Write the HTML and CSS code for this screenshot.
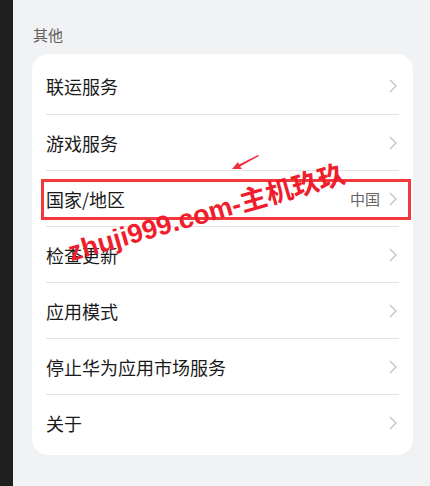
FILE: index.html
```html
<!DOCTYPE html>
<html lang="zh-CN">
<head>
<meta charset="utf-8">
<link rel="stylesheet" href="styles.css">
</head>
<body>
<div class="screen">
  <div class="strip"></div>
  <main class="content">
    <div class="section-title">其他</div>
    <div class="card">
      <div class="row"><span class="label">联运服务</span><span class="right"><svg class="chev" viewBox="0 0 8 14"><path d="M1 1 L7 7 L1 13" /></svg></span></div>
      <div class="row"><span class="label">游戏服务</span><span class="right"><svg class="chev" viewBox="0 0 8 14"><path d="M1 1 L7 7 L1 13" /></svg></span></div>
      <div class="row"><span class="label">国家/地区</span><span class="right"><span class="value">中国</span><svg class="chev" viewBox="0 0 8 14"><path d="M1 1 L7 7 L1 13" /></svg></span></div>
      <div class="row"><span class="label">检查更新</span><span class="right"><svg class="chev" viewBox="0 0 8 14"><path d="M1 1 L7 7 L1 13" /></svg></span></div>
      <div class="row"><span class="label">应用模式</span><span class="right"><svg class="chev" viewBox="0 0 8 14"><path d="M1 1 L7 7 L1 13" /></svg></span></div>
      <div class="row"><span class="label">停止华为应用市场服务</span><span class="right"><svg class="chev" viewBox="0 0 8 14"><path d="M1 1 L7 7 L1 13" /></svg></span></div>
      <div class="row"><span class="label">关于</span><span class="right"><svg class="chev" viewBox="0 0 8 14"><path d="M1 1 L7 7 L1 13" /></svg></span></div>
    </div>
  </main>
  <div class="highlight"></div>
  <svg class="arrow" viewBox="0 0 30 18"><polygon points="27,1 28,2 9,12.5 11,15 1,15 7,8 8,10.5" /></svg>
  <div class="watermark">zhuji999.com-主机玖玖</div>
</div>
</body>
</html>
```
FILE: styles.css
```css
html, body {
  margin: 0;
  padding: 0;
}
body {
  background: #f1f2f4;
  font-family: "Noto Sans CJK SC", "Noto Sans", sans-serif;
}
.screen {
  position: relative;
  display: flex;
  width: 430px;
  height: 486px;
  overflow: hidden;
}
.strip {
  width: 13px;
  flex: none;
  background: #1f1f1f;
}
.content {
  flex: 1;
  padding: 25px 17px 0 19px;
}
.section-title {
  font-size: 15px;
  line-height: 20px;
  color: #5f5f60;
  padding-left: 1px;
}
.card {
  margin-top: 9px;
  background: #ffffff;
  border-radius: 16px;
  padding: 4px 0 5px;
}
.row {
  display: flex;
  align-items: center;
  justify-content: space-between;
  height: 56px;
  margin: 0 14px;
  box-sizing: border-box;
}
.row + .row {
  border-top: 1px solid #e3e3e5;
}
.label {
  font-size: 18px;
  color: #1a1a1a;
}
.right {
  display: flex;
  align-items: center;
  gap: 9px;
  padding-right: 2px;
}
.value {
  font-size: 15px;
  color: #666666;
}
.chev {
  width: 8px;
  height: 14px;
  fill: none;
  stroke: #c4c4c6;
  stroke-width: 1.4;
}
.highlight {
  position: absolute;
  left: 41px;
  top: 179px;
  width: 364px;
  height: 35px;
  border: 3px solid #f23a3e;
}
.arrow {
  position: absolute;
  left: 231px;
  top: 154px;
  width: 30px;
  height: 18px;
  fill: #f0303a;
}
.watermark {
  position: absolute;
  left: 73px;
  top: 237px;
  font-family: "Liberation Sans", "Noto Sans CJK SC", sans-serif;
  font-weight: bold;
  font-size: 27px;
  line-height: 30px;
  color: #f01e2c;
  white-space: nowrap;
  transform: rotate(-16deg);
  transform-origin: left bottom;
}
```
